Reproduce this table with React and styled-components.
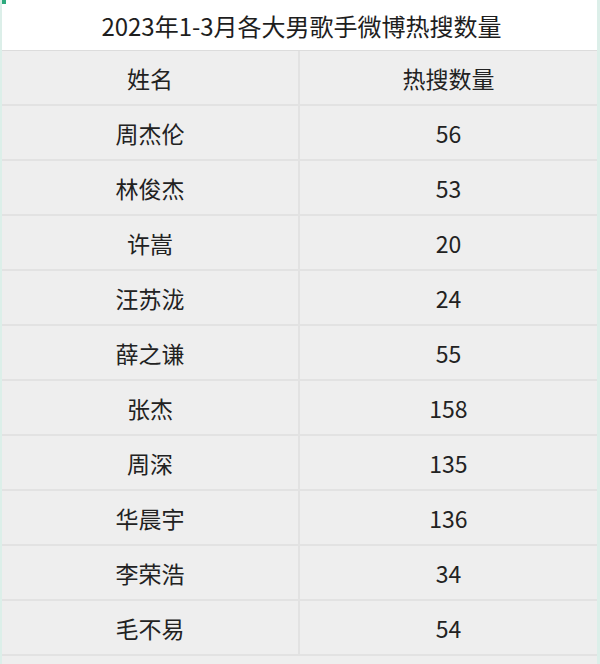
import React from "react";
import styled, { createGlobalStyle } from "styled-components";

const Global = createGlobalStyle`
  html, body { margin: 0; padding: 0; background: #ffffff; }
  body { font-family: "Noto Sans CJK SC", "Noto Sans", sans-serif; }
`;

const Page = styled.div`
  position: relative;
  width: 600px;
  height: 664px;
  overflow: hidden;
  background: #eeeeee;
  box-sizing: border-box;
  border-left: 2px solid #dcefe9;
  border-right: 3px solid #dcefe9;
`;

const Corner = styled.div`
  position: absolute;
  left: 0;
  top: 0;
  width: 4px;
  height: 4px;
  background: #2eaa7e;
`;

const Title = styled.div`
  height: 50px;
  background: #ffffff;
  border-bottom: 1px solid #dcdcdc;
  display: flex;
  align-items: center;
  justify-content: center;
  font-size: 24px;
  color: #1e1e1e;
  padding-left: 4px;
`;

const Table = styled.div`
  display: grid;
  grid-template-columns: 298px 1fr;
  grid-auto-rows: 55px;
`;

const Cell = styled.div`
  display: flex;
  align-items: center;
  justify-content: center;
  font-size: 23px;
  color: #222222;
  box-sizing: border-box;
  border-bottom: 2px solid #e2e2e2;
  border-right: ${(p) => (p.$first ? "2px solid #e2e2e2" : "none")};
`;

const rows = [
  ["周杰伦", "56"],
  ["林俊杰", "53"],
  ["许嵩", "20"],
  ["汪苏泷", "24"],
  ["薛之谦", "55"],
  ["张杰", "158"],
  ["周深", "135"],
  ["华晨宇", "136"],
  ["李荣浩", "34"],
  ["毛不易", "54"],
];

export default function App() {
  return (
    <>
      <Global />
      <Page>
        <Corner />
        <Title>2023年1-3月各大男歌手微博热搜数量</Title>
        <Table>
          <Cell $first>姓名</Cell>
          <Cell>热搜数量</Cell>
          {rows.map(([n, v]) => (
            <React.Fragment key={n}>
              <Cell $first>{n}</Cell>
              <Cell>{v}</Cell>
            </React.Fragment>
          ))}
        </Table>
      </Page>
    </>
  );
}
